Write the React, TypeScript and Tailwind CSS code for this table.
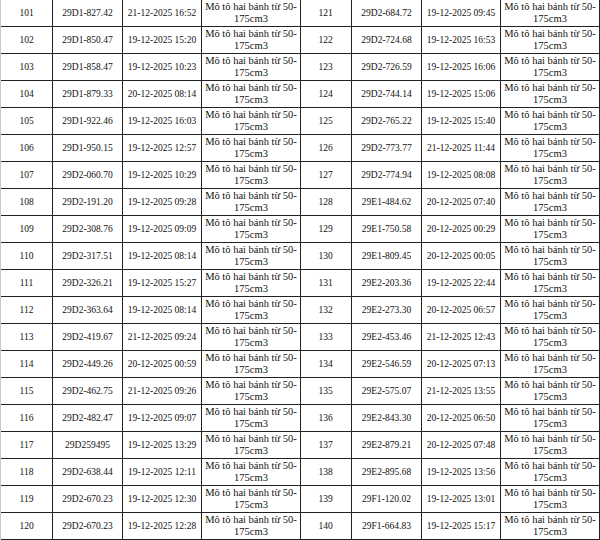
import React from 'react';

type Row = [number, string, string];

const left: Row[] = [
  [101, '29D1-827.42', '21-12-2025 16:52'],
  [102, '29D1-850.47', '19-12-2025 15:20'],
  [103, '29D1-858.47', '19-12-2025 10:23'],
  [104, '29D1-879.33', '20-12-2025 08:14'],
  [105, '29D1-922.46', '19-12-2025 16:03'],
  [106, '29D1-950.15', '19-12-2025 12:57'],
  [107, '29D2-060.70', '19-12-2025 10:29'],
  [108, '29D2-191.20', '19-12-2025 09:28'],
  [109, '29D2-308.76', '19-12-2025 09:09'],
  [110, '29D2-317.51', '19-12-2025 08:14'],
  [111, '29D2-326.21', '19-12-2025 15:27'],
  [112, '29D2-363.64', '19-12-2025 08:14'],
  [113, '29D2-419.67', '21-12-2025 09:24'],
  [114, '29D2-449.26', '20-12-2025 00:59'],
  [115, '29D2-462.75', '21-12-2025 09:26'],
  [116, '29D2-482.47', '19-12-2025 09:07'],
  [117, '29D259495', '19-12-2025 13:29'],
  [118, '29D2-638.44', '19-12-2025 12:11'],
  [119, '29D2-670.23', '19-12-2025 12:30'],
  [120, '29D2-670.23', '19-12-2025 12:28'],
];

const right: Row[] = [
  [121, '29D2-684.72', '19-12-2025 09:45'],
  [122, '29D2-724.68', '19-12-2025 16:53'],
  [123, '29D2-726.59', '19-12-2025 16:06'],
  [124, '29D2-744.14', '19-12-2025 15:06'],
  [125, '29D2-765.22', '19-12-2025 15:40'],
  [126, '29D2-773.77', '21-12-2025 11:44'],
  [127, '29D2-774.94', '19-12-2025 08:08'],
  [128, '29E1-484.62', '20-12-2025 07:40'],
  [129, '29E1-750.58', '20-12-2025 00:29'],
  [130, '29E1-809.45', '20-12-2025 00:05'],
  [131, '29E2-203.36', '19-12-2025 22:44'],
  [132, '29E2-273.30', '20-12-2025 06:57'],
  [133, '29E2-453.46', '21-12-2025 12:43'],
  [134, '29E2-546.59', '20-12-2025 07:13'],
  [135, '29E2-575.07', '21-12-2025 13:55'],
  [136, '29E2-843.30', '20-12-2025 06:50'],
  [137, '29E2-879.21', '20-12-2025 07:48'],
  [138, '29E2-895.68', '19-12-2025 13:56'],
  [139, '29F1-120.02', '19-12-2025 13:01'],
  [140, '29F1-664.83', '19-12-2025 15:17'],
];

const cell =
  'flex items-center justify-center border-r border-b border-[#222] text-center';

function Table({ rows, edge }: { rows: Row[]; edge: string }) {
  return (
    <div className={`grid w-[300px] grid-cols-[52px_70px_79px_99px] auto-rows-[27px] ${edge}`}>
      {rows.map(([no, plate, time]) => (
        <React.Fragment key={no}>
          <div className={`${cell} text-[9.5px]`}>{no}</div>
          <div className={`${cell} text-[9.5px]`}>{plate}</div>
          <div className={`${cell} text-[9.5px]`}>{time}</div>
          <div className={`${cell} px-[2px] text-[10.5px] leading-[12px]`}>
            Mô tô hai bánh từ 50-175cm3
          </div>
        </React.Fragment>
      ))}
    </div>
  );
}

export default function App() {
  return (
    <div className="flex h-[540px] w-[600px] overflow-hidden bg-white text-[#111] font-['Liberation_Serif','Times_New_Roman',serif]">
      <Table rows={left} edge="border-l border-[#c8c8c8]" />
      <Table rows={right} edge="" />
    </div>
  );
}
